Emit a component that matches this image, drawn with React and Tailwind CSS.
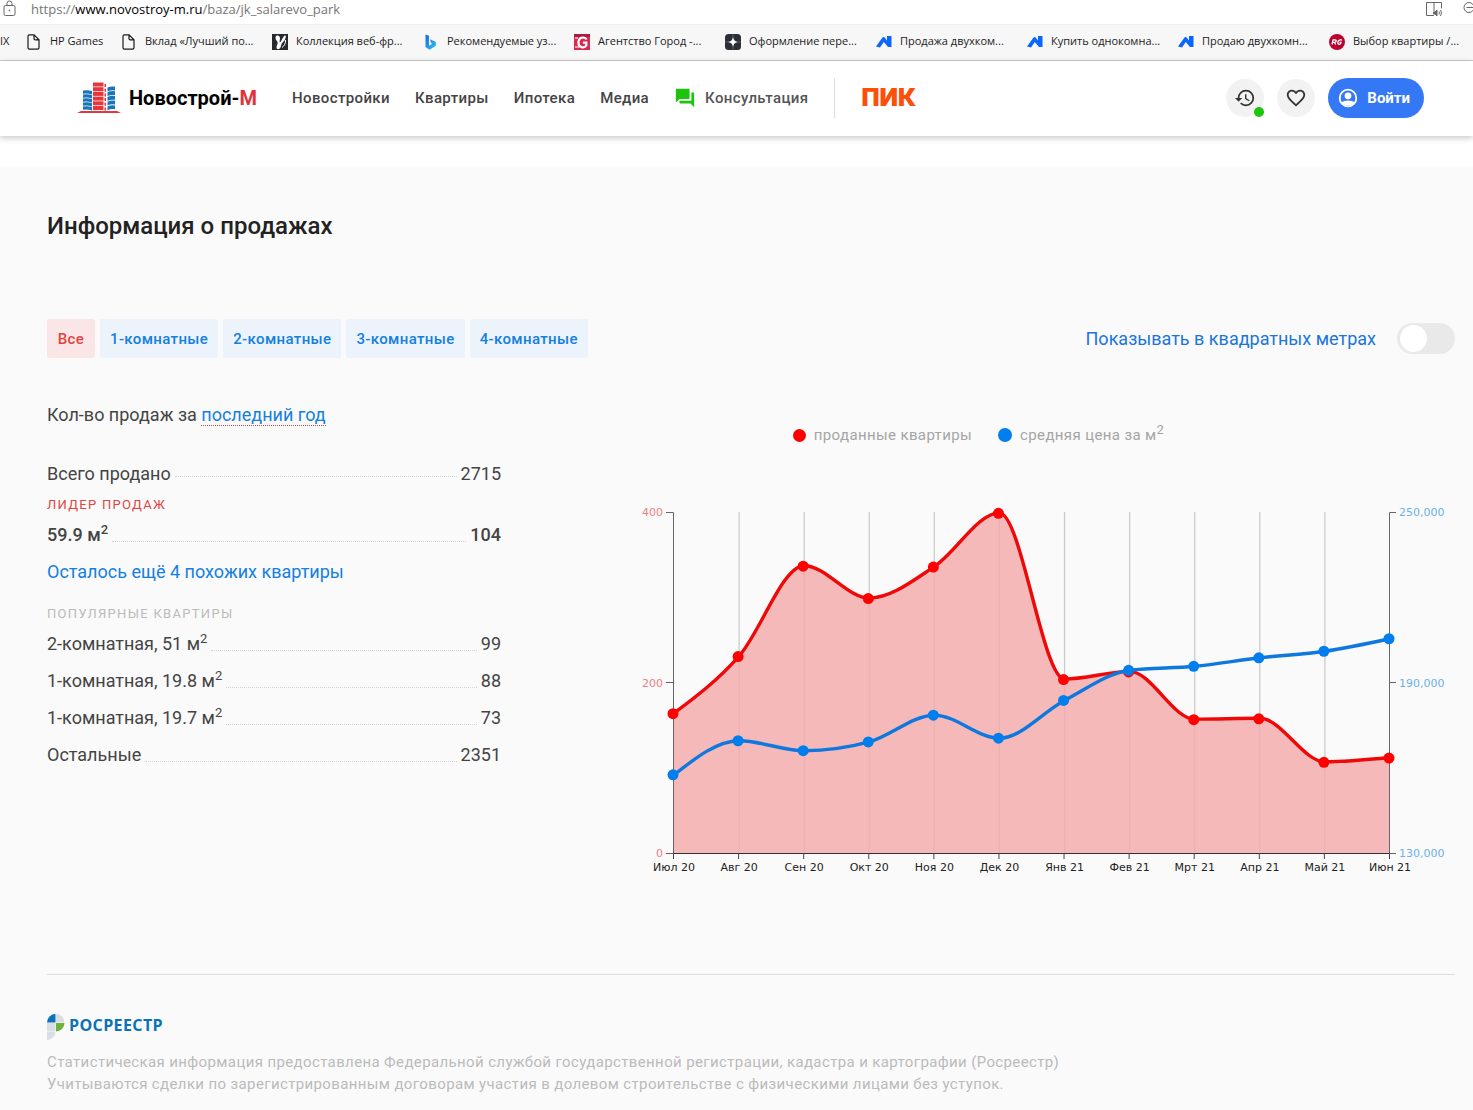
import React from "react";
import { MdQuestionAnswer, MdHistory, MdFavoriteBorder } from "react-icons/md";

const MONTHS = ["Июл 20", "Авг 20", "Сен 20", "Окт 20", "Ноя 20", "Дек 20", "Янв 21", "Фев 21", "Мрт 21", "Апр 21", "Май 21", "Июн 21"];
const SOLD = [164, 231, 337, 299, 336, 399, 204, 213, 157, 158, 107, 112];
const PRICE = [157500, 169500, 166000, 169100, 178500, 170400, 183700, 194300, 195700, 198700, 201000, 205400];

const LEFT = 39;
const RIGHT = 755;
const TOP = 12;
const BOTTOM = 353;

const xAt = (i) => LEFT + (i * (RIGHT - LEFT)) / (MONTHS.length - 1);
const soldY = (v) => BOTTOM - (v / 400) * (BOTTOM - TOP);
const priceY = (v) => BOTTOM - ((v - 130000) / 120000) * (BOTTOM - TOP);

// Monotone cubic interpolation: the curve is flat at each local extremum.
function curve(ys) {
  const n = ys.length;
  const h = xAt(1) - xAt(0);
  const s = ys.slice(1).map((y, i) => (y - ys[i]) / h);
  const m = ys.map((_, i) => {
    if (i === 0 || i === n - 1) return 0;
    const a = s[i - 1];
    const b = s[i];
    return (Math.sign(a) + Math.sign(b)) * Math.min(Math.abs(a), Math.abs(b), 0.25 * Math.abs(a + b));
  });
  m[0] = (3 * s[0] - m[1]) / 2;
  m[n - 1] = (3 * s[n - 2] - m[n - 2]) / 2;
  let d = `M${xAt(0)},${ys[0]}`;
  for (let i = 1; i < n; i++) {
    d += `C${xAt(i - 1) + h / 3},${ys[i - 1] + (m[i - 1] * h) / 3} ${xAt(i) - h / 3},${ys[i] - (m[i] * h) / 3} ${xAt(i)},${ys[i]}`;
  }
  return d;
}

function SalesChart() {
  const sold = SOLD.map(soldY);
  const price = PRICE.map(priceY);
  const line = curve(sold);
  return (
    <svg viewBox="0 0 820 380" className="block w-full font-['DejaVu_Sans'] text-[11px]" role="img" aria-label="Продажи и средняя цена по месяцам">
      {MONTHS.slice(1, -1).map((m, i) => (
        <line key={m} x1={xAt(i + 1)} x2={xAt(i + 1)} y1={TOP} y2={BOTTOM} stroke="#cccccc" strokeWidth="1.3" />
      ))}
      <path d={`${line}L${RIGHT},${BOTTOM}L${LEFT},${BOTTOM}Z`} fill="#f4a9a9" fillOpacity="0.8" />
      <path d={`M${LEFT - 8},${TOP + 0.5}H${LEFT - 0.5}V${BOTTOM + 0.5}H${LEFT - 8}M${LEFT - 8},182.5H${LEFT}`} fill="none" stroke="#666" />
      <path d={`M${RIGHT + 6},${TOP + 0.5}H${RIGHT - 0.5}V${BOTTOM + 0.5}H${RIGHT + 6}M${RIGHT + 6},182.5H${RIGHT}`} fill="none" stroke="#666" />
      <path d={`M${LEFT},${BOTTOM + 0.5}H${RIGHT}`} stroke="#333" />
      {MONTHS.map((m, i) => (
        <g key={m}>
          <line x1={xAt(i) - 0.5} x2={xAt(i) - 0.5} y1={BOTTOM} y2={BOTTOM + 6} stroke="#444" />
          <text x={xAt(i)} y={371} textAnchor="middle" fill="#222">{m}</text>
        </g>
      ))}
      {[[400, TOP], [200, 183], [0, BOTTOM]].map(([v, y]) => (
        <text key={v} x={28} y={y + 4} textAnchor="end" fill="#ec8080">{v}</text>
      ))}
      {[["250,000", TOP], ["190,000", 183], ["130,000", BOTTOM]].map(([v, y]) => (
        <text key={v} x={764} y={y + 4} fill="#6db0e8">{v}</text>
      ))}
      <path d={line} fill="none" stroke="#ee0808" strokeWidth="3.4" />
      {sold.map((y, i) => <circle key={i} cx={xAt(i) - 1} cy={y + 0.5} r="5.5" fill="#ff0000" />)}
      <path d={curve(price)} fill="none" stroke="#0f78de" strokeWidth="3.4" />
      {price.map((y, i) => <circle key={i} cx={xAt(i) - 1} cy={y} r="5.5" fill="#007eee" />)}
    </svg>
  );
}

const PageIcon = () => (
  <svg viewBox="0 0 16 16" className="size-4" fill="none" stroke="#1a1a1a" strokeWidth="1.2">
    <path d="M2 2.2Q2 .8 3.4 .8H8l5 5v8q0 1.4-1.4 1.4H3.4Q2 15.2 2 13.8ZM8 .8v3.6q0 1.4 1.4 1.4H13" />
  </svg>
);
const CollectionIcon = () => (
  <svg viewBox="0 0 16 16" className="size-4">
    <path d="M0 0h16v16H0z" fill="#27292d" />
    <path d="M5 1.500c1.500-.5 3 .8 3 3C8 6 7.300 7 7.800 8.500 9.500 7.500 10 4.500 12 2c.8-.9 2-.6 1.800.8-.4 2.700-2 5-4 6.500C9 11 9.200 14 7 15c-2 .7-3-1-2.300-3C5.300 10.500 6 9.500 5.500 8 5 6.500 3.500 6 3.500 4 3.500 2.700 4 1.800 5 1.500z" fill="#fff" />
    <path d="M13.500 6c.3 3-.8 5.500-3.500 7.500" stroke="#fff" fill="none" />
  </svg>
);
const BingIcon = () => (
  <svg viewBox="0 0 16 16" className="size-4">
    <defs>
      <linearGradient id="bing" x1="0" y1="0" x2="1" y2="1">
        <stop offset="0" stopColor="#1b66e0" />
        <stop offset="1" stopColor="#35c4f4" />
      </linearGradient>
    </defs>
    <path d="M2.500.5 6 1.800v10l3-1.800L7.800 8.200 7 5.300l4.500 1.900c2.200 1 2.200 4 .4 5.300L6.500 15.700 2.500 13z" fill="url(#bing)" />
  </svg>
);
const CityIcon = () => (
  <svg viewBox="0 0 16 16" className="size-4">
    <path d="M0 0h16v16H0z" fill="#d92b52" />
    <path d="M0 0h16v3H0z" fill="#a81d3c" />
    <path d="M12.300 5.500C11.500 3 5 2 4.500 8s6 6.500 7.800 3.500V8.700H9" fill="none" stroke="#fff" strokeWidth="2.2" />
    <path d="M1 4h3M1 13h4" stroke="#fff" />
  </svg>
);
const StarIcon = () => (
  <svg viewBox="0 0 16 16" className="size-4">
    <rect width="16" height="16" rx="3.5" fill="#2c2f36" />
    <path d="M8 0v16M0 8h16" stroke="#777" strokeWidth=".6" />
    <path d="M8 3q.6 4.400 5 5-4.400.6-5 5-.6-4.400-5-5 4.400-.6 5-5z" fill="#fff" />
  </svg>
);
const RoofIcon = () => (
  <svg viewBox="0 0 16 16" className="size-4">
    <path d="M0 12.500 6.500 3.500q1-1.200 2.200 0L11 6.500V2h4.500v11H12L7.800 8 4 13.500z" fill="#0a66ff" />
  </svg>
);
const RgIcon = () => (
  <svg viewBox="0 0 16 16" className="size-4">
    <circle cx="8" cy="8" r="8" fill="#b8042f" />
    <path d="m3 10.500 1.100-4.700h2q1.600.2.900 1.700-.4.900-1.700.9H4M5.600 8.500l1 2M12.800 6.600q-.4-1-1.800-.8-1.900.4-2.200 2.500-.1 2.100 1.600 2 1.300-.2 1.600-1.900h-1.400" fill="none" stroke="#fff" strokeWidth="1.3" />
  </svg>
);

const BOOKMARKS = [
  [PageIcon, "Вклад «Лучший по..."],
  [CollectionIcon, "Коллекция веб-фр..."],
  [BingIcon, "Рекомендуемые уз..."],
  [CityIcon, "Агентство Город -..."],
  [StarIcon, "Оформление пере..."],
  [RoofIcon, "Продажа двухком..."],
  [RoofIcon, "Купить однокомна..."],
  [RoofIcon, "Продаю двухкомн..."],
  [RgIcon, "Выбор квартиры /..."],
];

function BrowserBars() {
  return (
    <div className="overflow-hidden font-['Open_Sans',sans-serif]">
      <div className="flex h-6 items-start bg-white pl-[3px]">
        <svg viewBox="0 0 14 17" width="14" height="17" className="shrink-0" fill="none" stroke="#666">
          <rect x="1" y="5.5" width="11" height="10" rx="1.5" />
          <path d="M4 5.500V3.500a2.500 2.500 0 0 1 5 0v2" />
          <circle cx="6.5" cy="10.5" r=".5" />
        </svg>
        <div className="ml-3.5 grow text-[13px] leading-[18px] whitespace-nowrap text-[#767676]">
          https://<span className="text-black">www.novostroy-m.ru</span>/baza/jk_salarevo_park
        </div>
        <div className="flex shrink-0 gap-5">
          <svg viewBox="0 0 18 18" width="18" height="18" fill="none" stroke="#666">
            <path d="M9 15.500H1.500v-13H16.500v6M9 2.500v9" />
            <path d="M8.500 12h1.500l2-2v6l-2-2H8.500z" fill="#666" />
            <path d="M14 11.500q1 1.500 0 3M15.500 10q2 3 0 6" />
          </svg>
          <svg viewBox="0 0 10 18" width="10" height="18" fill="none" stroke="#666">
            <circle cx="6" cy="7.5" r="5" />
            <path d="M3.500 7.500H10" />
          </svg>
        </div>
      </div>
      <div className="flex h-[37px] items-center border-t border-b border-t-[#efefef] border-b-[#cbcbcb] bg-[#f7f7f7] pb-0.5 text-[11px] whitespace-nowrap text-[#1b1b1b]">
        <a href="#ix" className="flex w-[26px] shrink-0 justify-start">IX</a>
        <a href="#hp" className="flex w-[95px] shrink-0 items-center gap-2">
          <PageIcon />HP Games
        </a>
        {BOOKMARKS.map(([Icon, text]) => (
          <a key={text} href="#bookmark" className="mr-4 flex shrink-0 items-center gap-2">
            <Icon />
            <span className="w-[111px]">{text}</span>
          </a>
        ))}
      </div>
    </div>
  );
}

function BuildingsLogo() {
  return (
    <svg viewBox="0 0 44 32" width="44" height="32" className="shrink-0">
      {[0, 1, 2, 3, 4].map((i) => (
        <g key={i} fill="#1a75b8">
          <path d={`M6 ${8.6 + i * 4}q4.500-.9 9 .5v3.300q-4.500-1.200-9-.6z`} />
          <path d={`M30.500 ${5.600 + i * 4.700}q3.500-1.700 7.500-1v3.800q-4-.6-7.500 1z`} />
        </g>
      ))}
      {[0, 1, 2, 3, 4, 5].map((i) => (
        <g key={i} fill="#e7353b">
          <path d={`M16 ${0.5 + i * 4.700}h10.500v4H16z`} />
          <path d={`M27.500 ${2 + i * 4.700}h1.500v3h-1.500z`} />
        </g>
      ))}
      <path d="M0 31 4 29h36l4 2z" fill="#e7353b" />
    </svg>
  );
}

const AccountIcon = () => (
  <svg viewBox="0 0 20 20" width="20" height="20" fill="#fff">
    <circle cx="10" cy="10" r="8.3" fill="none" stroke="#fff" strokeWidth="1.8" />
    <circle cx="10" cy="7.8" r="3.4" />
    <path d="M3.500 14.500C5.500 11.700 14.500 11.700 16.500 14.500 14 18.500 6 18.500 3.500 14.500z" />
  </svg>
);

function SiteHeader() {
  return (
    <header className="relative flex h-[75px] items-center bg-white pr-[49px] pb-px pl-[77px] font-['Roboto'] text-[15px] font-medium tracking-wide whitespace-nowrap text-[#444] shadow-[0_2px_6px_rgba(0,0,0,0.22)]">
      <a href="#home" className="flex items-center gap-2">
        <BuildingsLogo />
        <span className="w-[130px] text-xl leading-8 font-bold tracking-normal text-black">
          Новострой-<span className="text-[#e0343a]">М</span>
        </span>
      </a>
      <nav className="ml-[33px] flex items-center gap-[25px]">
        <a href="#new">Новостройки</a>
        <a href="#flats">Квартиры</a>
        <a href="#mortgage">Ипотека</a>
        <a href="#media">Медиа</a>
        <a href="#chat" className="flex items-center gap-[9px] text-[#555]">
          <MdQuestionAnswer className="size-[22px] text-[#1cc40c]" />Консультация
        </a>
      </nav>
      <div className="mx-[26px] h-10 w-px bg-[#ddd]" />
      <a href="#pik" className="font-['Inter'] text-2xl font-black tracking-normal text-[#fb4f0a]">ПИК</a>
      <div className="ml-auto flex items-center gap-[13px]">
        <button type="button" aria-label="История" className="relative flex size-[38px] items-center justify-center rounded-full bg-[#f2f2f2] text-[#333]">
          <MdHistory className="size-[22px]" />
          <span className="absolute right-0 bottom-0 size-2.5 rounded-full bg-[#1cc40c]" />
        </button>
        <button type="button" aria-label="Избранное" className="flex size-[38px] items-center justify-center rounded-full bg-[#f2f2f2] text-[#333]">
          <MdFavoriteBorder className="size-[22px]" />
        </button>
        <button type="button" className="flex h-10 items-center gap-[9px] rounded-full bg-[#3578f6] pr-3.5 pl-2.5 font-bold tracking-normal text-white">
          <AccountIcon />Войти
        </button>
      </div>
    </header>
  );
}

const Sq = () => <sup className="text-[13px] leading-none">2</sup>;

function Row({ label, value, bold, low }) {
  return (
    <div className={bold ? "flex h-[37px] items-center pb-0.5 font-medium" : "flex h-[37px] items-center pb-0.5"}>
      <dt className="whitespace-nowrap">{label}</dt>
      <dd className={low ? "mx-1 mt-3.5 grow border-b border-dotted border-[#d4d4d4]" : "mx-1 mt-1.5 grow border-b border-dotted border-[#d4d4d4]"} />
      <dd>{value}</dd>
    </div>
  );
}

const TABS = ["Все", "1-комнатные", "2-комнатные", "3-комнатные", "4-комнатные"];

export default function App() {
  return (
    <div className="min-h-screen bg-[#fafafa] font-['Roboto',sans-serif] text-[#444]">
      <BrowserBars />
      <SiteHeader />
      <div className="h-[31px] bg-white" />
      <main className="pr-[18px] pl-[47px]">
        <h2 className="pt-11 text-2xl leading-[30px] font-medium text-[#222]">Информация о продажах</h2>
        <div className="mt-[78px] flex items-center justify-between">
          <div className="flex gap-[5px]">
            {TABS.map((t, i) => (
              <button
                key={t}
                type="button"
                className={
                  i === 0
                    ? "h-[39px] min-w-12 rounded-xs bg-[#fae6e6] px-2.5 pt-0.5 text-[15px] font-medium tracking-wide text-[#e0453f]"
                    : "h-[39px] rounded-xs bg-[#edf3fa] px-2.5 pt-0.5 text-[15px] font-medium tracking-wide text-[#1380e0]"
                }
              >
                {t}
              </button>
            ))}
          </div>
          <label className="flex items-center gap-[21px] text-lg text-[#1b75dc]">
            Показывать в квадратных метрах
            <input
              type="checkbox"
              className="relative h-[31px] w-[58px] appearance-none rounded-full bg-[#e9e9e9] before:absolute before:top-0.5 before:left-[3px] before:size-[27px] before:rounded-full before:bg-white checked:bg-[#1b75dc] checked:before:left-7"
            />
          </label>
        </div>
        <div className="mt-[42px] flex justify-between">
          <section className="w-[454px] shrink-0 text-lg">
            <p className="leading-[30px]">
              Кол-во продаж за{" "}
              <button type="button" className="border-b border-dotted border-[#c44] leading-[21px] text-[#1380e0]">последний год</button>
            </p>
            <dl className="mt-[26px]">
              <Row label="Всего продано" value="2715" />
              <div className="text-[13px] leading-6 tracking-widest text-[#e0453f] uppercase">Лидер продаж</div>
              <Row bold low label={<>59.9 м<Sq /></>} value="104" />
              <a href="#similar" className="flex h-[37px] items-center pb-0.5 text-[#1380e0]">Осталось ещё 4 похожих квартиры</a>
              <div className="mt-2.5 text-[13px] leading-[25px] tracking-widest text-[#bbb] uppercase">Популярные квартиры</div>
              <Row low label={<>2-комнатная, 51 м<Sq /></>} value="99" />
              <Row low label={<>1-комнатная, 19.8 м<Sq /></>} value="88" />
              <Row low label={<>1-комнатная, 19.7 м<Sq /></>} value="73" />
              <Row low label="Остальные" value="2351" />
            </dl>
          </section>
          <section className="ml-[134px] grow pt-[23px]">
            <div className="flex justify-center gap-[26px] pr-[133px] text-[15px] leading-6 tracking-wide text-[#a5a5a5]">
              <span className="flex items-center gap-2">
                <span className="size-[13px] rounded-full bg-[#ff0000]" />проданные квартиры
              </span>
              <span className="flex items-center gap-2">
                <span className="size-3.5 rounded-full bg-[#007eee]" />
                <span>средняя цена за м<Sq /></span>
              </span>
            </div>
            <div className="pt-[53px]">
              <SalesChart />
            </div>
          </section>
        </div>
        <footer className="mt-[94px] border-t border-[#ddd] pt-[39px] pb-4">
          <div className="flex items-start gap-1">
            <svg viewBox="0 0 18 26" width="18" height="26">
              <path d="M8.500 0v8.500H0A8.500 8.500 0 0 1 8.500 0z" fill="#0a72b8" />
              <path d="M9 0a8.500 8.500 0 0 1 8.500 8.500H9zM0 9h8.500v8H0zM0 17.500h8.500A8.500 8.500 0 0 1 0 26z" fill="#d8dfe4" />
              <path d="M9 9h8.500A8.500 8.500 0 0 1 9 17.500z" fill="#6fb33a" />
            </svg>
            <span className="font-['Open_Sans'] text-base leading-[22px] font-bold tracking-wide text-[#0a72b8]">РОСРЕЕСТР</span>
          </div>
          <p className="mt-[11px] text-[15px] leading-[22px] tracking-wide text-[#bbb]">
            Статистическая информация предоставлена Федеральной службой государственной регистрации, кадастра и картографии (Росреестр)
            <br />
            Учитываются сделки по зарегистрированным договорам участия в долевом строительстве с физическими лицами без уступок.
          </p>
        </footer>
      </main>
    </div>
  );
}
